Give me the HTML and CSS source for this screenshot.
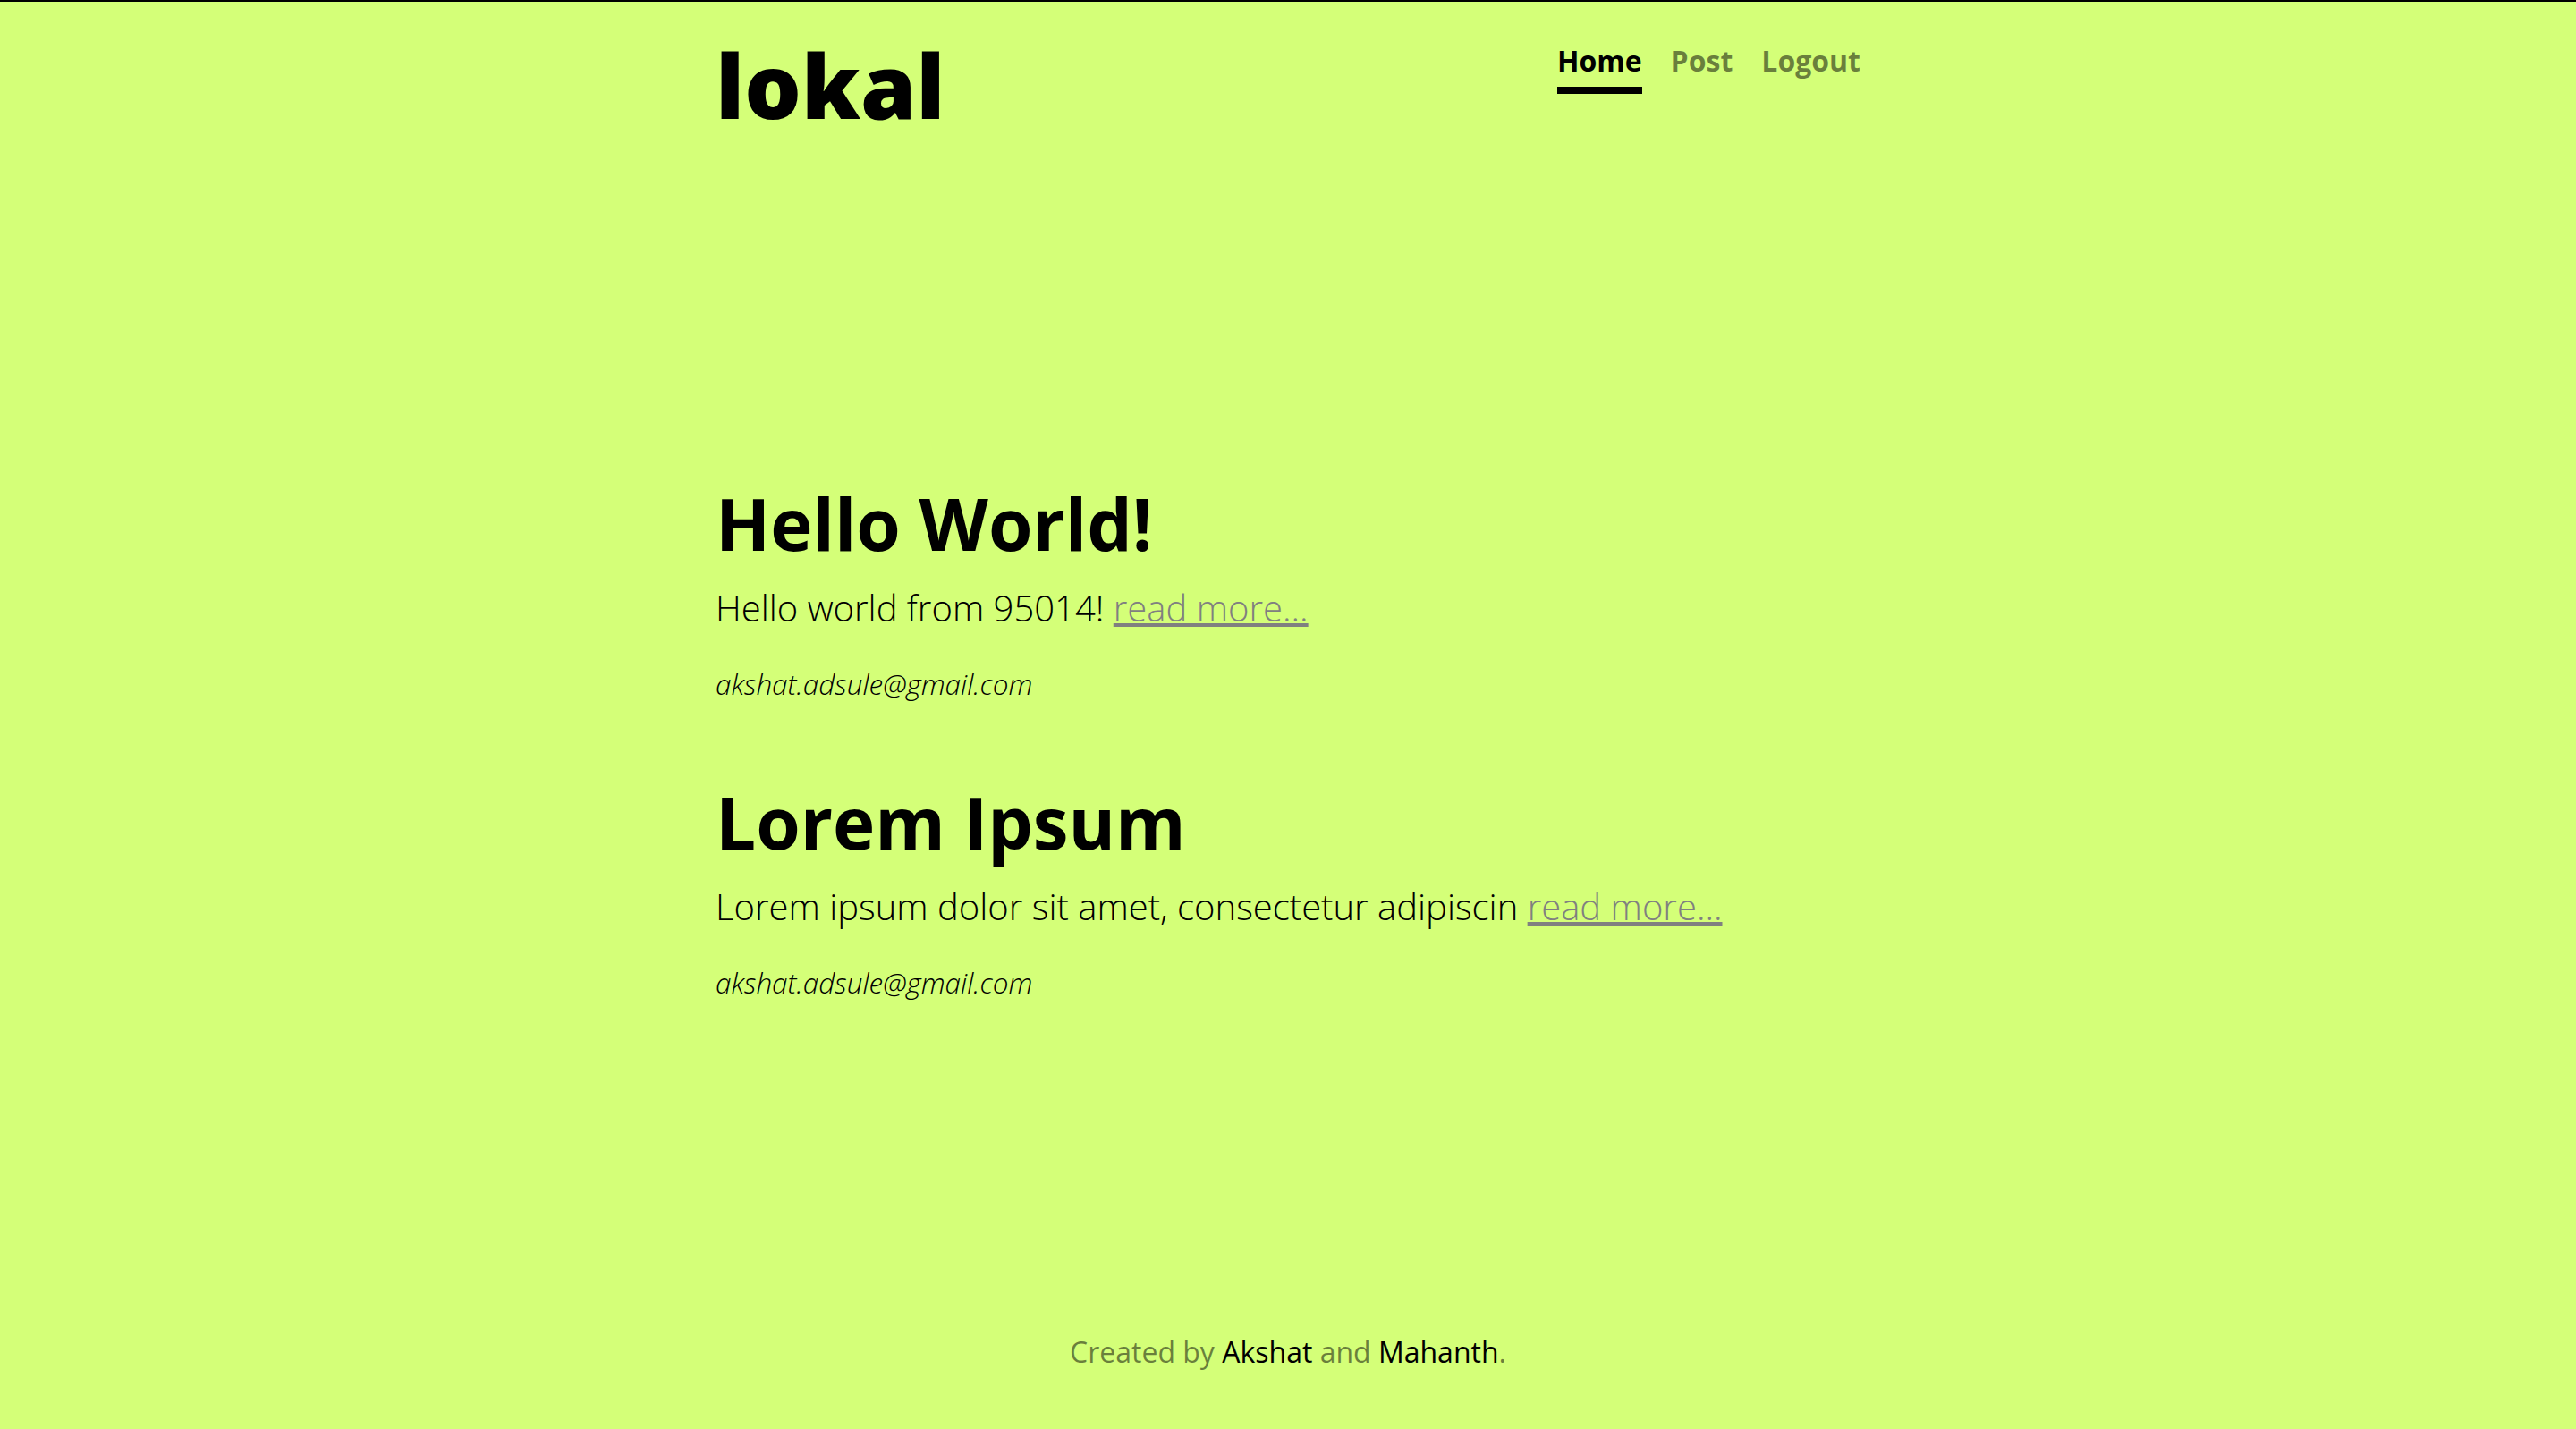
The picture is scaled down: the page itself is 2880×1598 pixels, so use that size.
FILE: index.html
```html
<!DOCTYPE html>
<html lang="en">
<head>
<meta charset="utf-8">
<title>lokal</title>
<link rel="stylesheet" href="styles.css">
</head>
<body>
  <div class="page">
    <header class="site-header container">
      <h1 class="logo">lokal</h1>
      <nav class="nav">
        <a class="nav-link active" href="#">Home</a>
        <a class="nav-link" href="#">Post</a>
        <a class="nav-link" href="#">Logout</a>
      </nav>
    </header>
    <main class="posts container">
      <article class="post">
        <h2 class="post-title">Hello World!</h2>
        <p class="post-body">Hello world from 95014! <a class="read-more" href="#">read more...</a></p>
        <p class="post-author">akshat.adsule@gmail.com</p>
      </article>
      <article class="post">
        <h2 class="post-title">Lorem Ipsum</h2>
        <p class="post-body">Lorem ipsum dolor sit amet, consectetur adipiscin <a class="read-more" href="#">read more...</a></p>
        <p class="post-author">akshat.adsule@gmail.com</p>
      </article>
    </main>
    <footer class="site-footer">
      Created by <a class="credit" href="#">Akshat</a> and <a class="credit" href="#">Mahanth</a>.
    </footer>
  </div>
</body>
</html>
```

FILE: styles.css
```css
* {
  box-sizing: border-box;
}

html, body {
  margin: 0;
  padding: 0;
}

body {
  background: #d4ff78;
  color: #000;
  font-family: "Open Sans", "Noto Sans", sans-serif;
  border-top: 2px solid #000;
}

.page {
  min-height: calc(100vh - 2px);
  display: flex;
  flex-direction: column;
}

.container {
  width: 1280px;
  margin: 0 auto;
}

.site-header {
  display: flex;
  justify-content: space-between;
  align-items: flex-start;
  padding-top: 42px;
}

.logo {
  margin: 0;
  font-size: 100px;
  line-height: 100px;
  font-weight: 800;
}

.nav {
  display: flex;
  gap: 32px;
  margin-top: 8px;
}

.nav-link {
  font-size: 32px;
  line-height: 32px;
  font-weight: 700;
  color: rgba(0, 0, 0, 0.5);
  text-decoration: none;
  padding-bottom: 13px;
  border-bottom: 8px solid transparent;
}

.nav-link.active {
  color: #000;
  border-bottom-color: #000;
}

.posts {
  flex: 1;
  padding-top: 393px;
}

.post + .post {
  margin-top: 82px;
}

.post-title {
  margin: 0;
  font-size: 80px;
  line-height: 96px;
  font-weight: 700;
}

.post-body {
  margin: 17px 0 0;
  font-size: 40px;
  line-height: 60px;
  font-weight: 300;
}

.read-more {
  color: #808080;
  text-decoration: underline;
}

.post-author {
  margin: 31px 0 0;
  font-size: 31.5px;
  line-height: 48px;
  font-weight: 300;
  font-style: italic;
}

.site-footer {
  text-align: center;
  font-size: 32px;
  line-height: 48px;
  padding-bottom: 62px;
  color: rgba(0, 0, 0, 0.5);
}

.credit {
  color: #000;
  text-decoration: none;
}
```
